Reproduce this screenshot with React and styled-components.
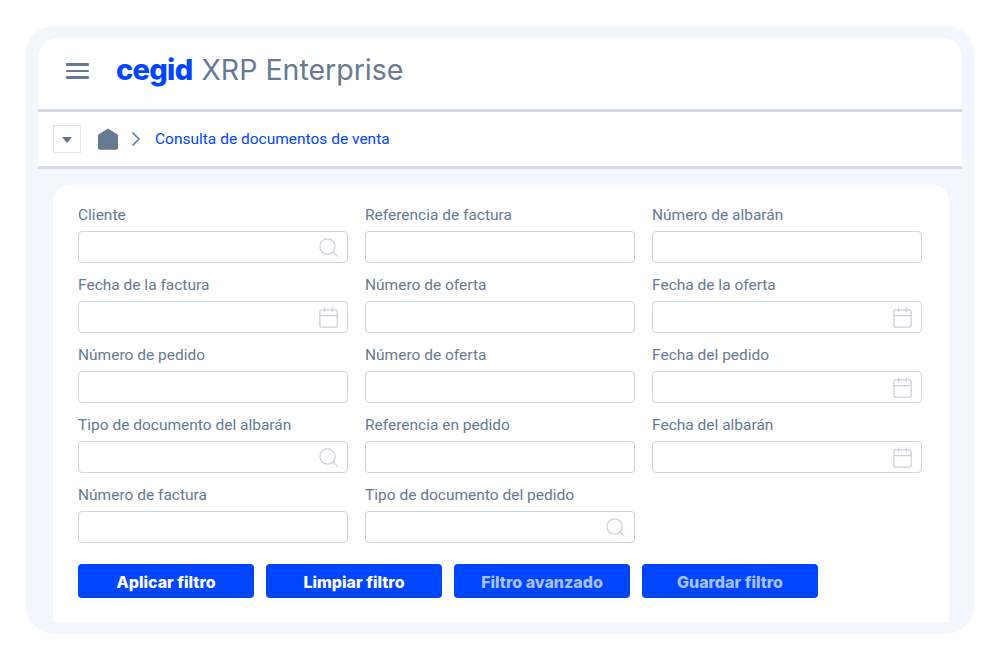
import React from 'react'
import styled, { createGlobalStyle } from 'styled-components'
import { Search, Calendar } from 'lucide-react'

const GlobalStyle = createGlobalStyle`
  html, body {
    margin: 0;
    padding: 0;
    background: #fff;
  }
  body {
    width: 1000px;
    height: 660px;
    overflow: hidden;
    font-family: Roboto, "Liberation Sans", sans-serif;
  }
`

const fields = [
  { label: 'Cliente', icon: 'search' },
  { label: 'Referencia de factura' },
  { label: 'Número de albarán' },
  { label: 'Fecha de la factura', icon: 'calendar' },
  { label: 'Número de oferta' },
  { label: 'Fecha de la oferta', icon: 'calendar' },
  { label: 'Número de pedido' },
  { label: 'Número de oferta' },
  { label: 'Fecha del pedido', icon: 'calendar' },
  { label: 'Tipo de documento del albarán', icon: 'search' },
  { label: 'Referencia en pedido' },
  { label: 'Fecha del albarán', icon: 'calendar' },
  { label: 'Número de factura' },
  { label: 'Tipo de documento del pedido', icon: 'search' },
]

const buttons = [
  { label: 'Aplicar filtro' },
  { label: 'Limpiar filtro' },
  { label: 'Filtro avanzado', muted: true },
  { label: 'Guardar filtro', muted: true },
]

function App() {
  return (
    <>
      <GlobalStyle />
      <Page>
        <Frame>
          <Window>
            <Header>
              <Burger aria-label="menu">
                <span />
                <span />
                <span />
              </Burger>
              <Logo>cegid</Logo>
              <Product>XRP Enterprise</Product>
            </Header>
            <Breadcrumb>
              <Toggle>
                <svg width="10" height="6" viewBox="0 0 10 6">
                  <path d="M0 0h10L5 6z" fill="#64748b" />
                </svg>
              </Toggle>
              <svg width="20" height="22" viewBox="0 0 20 22">
                <path
                  d="M10 .5 19.6 6.6c.3.2.4.5.4.8V20c0 1-.8 1.7-1.7 1.7H1.7C.8 21.700 0 21 0 20V7.400c0-.3.100-.6.400-.8z"
                  fill="#667a93"
                />
              </svg>
              <svg width="10" height="16" viewBox="0 0 10 16">
                <path d="M1.500 1.500 8 8l-6.500 6.500" fill="none" stroke="#667a93" strokeWidth="1.600" />
              </svg>
              <Crumb>Consulta de documentos de venta</Crumb>
            </Breadcrumb>
            <Body>
              <Card>
                <FormGrid>
                  {fields.map((field, i) => (
                    <Field key={i}>
                      <Label>{field.label}</Label>
                      <InputBox>
                        {field.icon === 'search' && <Search size={23} strokeWidth={1.300} />}
                        {field.icon === 'calendar' && <Calendar size={23} strokeWidth={1.300} />}
                      </InputBox>
                    </Field>
                  ))}
                </FormGrid>
                <Actions>
                  {buttons.map((b) => (
                    <ActionButton key={b.label} $muted={b.muted}>{b.label}</ActionButton>
                  ))}
                </Actions>
              </Card>
            </Body>
          </Window>
        </Frame>
      </Page>
    </>
  )
}

const Page = styled.div`
  width: 1000px;
  height: 660px;
  padding: 26px;
  box-sizing: border-box;
`

const Frame = styled.div`
  height: 608px;
  box-sizing: border-box;
  padding: 12px 12px 12px;
  background: #f2f7fe;
  border-radius: 28px;
`

const Window = styled.div`
  display: flex;
  flex-direction: column;
  height: 100%;
`

const Header = styled.header`
  display: flex;
  align-items: center;
  height: 74px;
  box-sizing: border-box;
  padding: 0 0 5px 28px;
  background: #fff;
  border-radius: 20px 20px 0 0;
  border-bottom: 3px solid #d3dae4;
`

const Burger = styled.div`
  display: flex;
  flex-direction: column;
  gap: 4px;
  width: 23px;
  margin-right: 27px;

  span {
    height: 2.500px;
    background: #667a93;
    border-radius: 1px;
  }
`

const Logo = styled.span`
  padding-bottom: 3px;
  font-family: Inter, sans-serif;
  font-size: 29px;
  font-weight: 800;
  letter-spacing: -0.7px;
  color: #0046fe;
  margin-right: 9px;
`

const Product = styled.span`
  padding-bottom: 3px;
  font-family: Inter, sans-serif;
  font-size: 28.500px;
  font-weight: 400;
  color: #667a93;
`

const Breadcrumb = styled.nav`
  display: flex;
  align-items: center;
  height: 57px;
  box-sizing: border-box;
  padding: 0 0 0 15px;
  background: #fff;
  border-bottom: 3px solid #d3dae4;

  svg {
    flex: none;
  }
  > svg:nth-of-type(1) {
    margin-left: 17px;
  }
  > svg:nth-of-type(2) {
    margin-left: 13px;
  }
`

const Toggle = styled.div`
  display: flex;
  align-items: center;
  justify-content: center;
  width: 28px;
  height: 28px;
  box-sizing: border-box;
  padding-top: 2px;
  border: 1px solid #e2e8f0;
`

const Crumb = styled.span`
  padding-bottom: 1px;
  margin-left: 14px;
  font-size: 15.500px;
  color: #0046fe;
`

const Body = styled.div`
  flex: 1;
  padding: 16px 13px 0 15px;
`

const Card = styled.section`
  height: 437px;
  box-sizing: border-box;
  padding: 21px 27px 0 25px;
  background: #fff;
  border-radius: 16px 16px 0 0;
`

const FormGrid = styled.div`
  display: grid;
  grid-template-columns: repeat(3, 270px);
  column-gap: 17px;
  row-gap: 8px;
`

const Field = styled.div`
  display: flex;
  flex-direction: column;
  height: 62px;
`

const Label = styled.label`
  height: 25px;
  font-size: 15.500px;
  line-height: 19px;
  color: #667a93;
`

const InputBox = styled.div`
  display: flex;
  align-items: center;
  justify-content: flex-end;
  height: 32px;
  box-sizing: border-box;
  padding-right: 7px;
  border: 1px solid #cdd5e0;
  border-radius: 4px;
  background: #fff;
  color: #c8d1dc;
`

const Actions = styled.div`
  display: flex;
  gap: 12px;
  margin-top: 16px;
`

const ActionButton = styled.button`
  width: 176px;
  height: 34px;
  padding: 1px 0 0;
  border: none;
  border-radius: 4px;
  background: #0046fe;
  font-family: Inter, sans-serif;
  font-size: 16px;
  font-weight: 800;
  color: ${(p) => (p.$muted ? '#a8c0f8' : '#fff')};
`

export default App
